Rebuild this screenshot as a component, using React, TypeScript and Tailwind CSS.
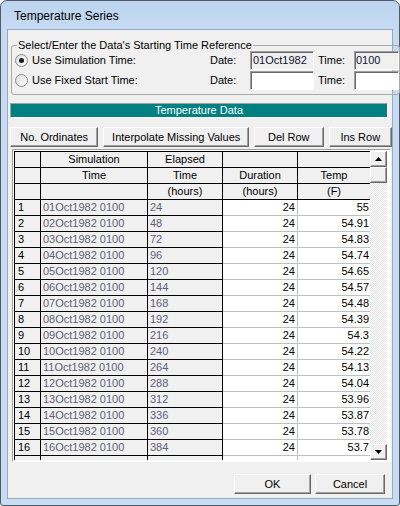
const temps = ['55', '54.91', '54.83', '54.74', '54.65', '54.57', '54.48', '54.39', '54.3', '54.22', '54.13', '54.04', '53.96', '53.87', '53.78', '53.7']

const btn =
  'flex items-center justify-center h-[20px] bg-[#f0f0f0] border border-t-white border-l-white border-r-[#696969] border-b-[#696969] shadow-[inset_-1px_-1px_0_#a0a0a0] text-[11px] text-black'

const sunken =
  'border border-t-[#a0a0a0] border-l-[#a0a0a0] border-r-white border-b-white shadow-[inset_1px_1px_0_#696969]'

function Radio({ checked }: { checked?: boolean }) {
  return (
    <span className="w-[13px] h-[13px] rounded-full border border-[#8a8a8a] bg-[linear-gradient(135deg,#dcdcdc,#ffffff)] flex items-center justify-center shrink-0">
      {checked && <span className="w-[5px] h-[5px] rounded-full bg-[#1a1a1a]" />}
    </span>
  )
}

function HeadRow({ cells }: { cells: string[] }) {
  return (
    <div className="flex h-[16px] shrink-0">
      <div className="w-[26px] border-r border-b border-black bg-[#f0f0f0]">{cells[0]}</div>
      <div className="w-[107px] border-r border-b border-black bg-[#f0f0f0] text-center leading-[15px]">{cells[1]}</div>
      <div className="w-[75px] border-r border-b border-black bg-[#f0f0f0] text-center leading-[15px]">{cells[2]}</div>
      <div className="w-[75px] border-r border-b border-black bg-[#f0f0f0] text-center leading-[15px]">{cells[3]}</div>
      <div className="w-[72px] border-b border-black bg-[#f0f0f0] text-center leading-[15px]">{cells[4]}</div>
    </div>
  )
}

function DataRow({ i }: { i: number }) {
  const has = i < temps.length
  return (
    <div className="flex h-[16px] shrink-0 leading-[15px]">
      <div className="w-[26px] border-r border-b border-black bg-[#f0f0f0] pl-[3px]">{has ? i + 1 : ''}</div>
      <div className="w-[107px] border-r border-b border-black bg-[#f0f0f0] pl-[2px] text-[#5e5e72]">
        {has ? `${String(i + 1).padStart(2, '0')}Oct1982 0100` : ''}
      </div>
      <div className="w-[75px] border-r border-b border-black bg-[#f0f0f0] pl-[2px] text-[#5e5e72]">{has ? (i + 1) * 24 : ''}</div>
      <div className="w-[75px] border-r border-b border-[#c0c0c0] bg-white text-right pr-[2px]">{has ? '24' : ''}</div>
      <div className="w-[72px] border-b border-[#c0c0c0] bg-white text-right pr-[1px]">{has ? temps[i] : ''}</div>
    </div>
  )
}

function ScrollBtn({ up }: { up?: boolean }) {
  return (
    <div className="h-[16px] shrink-0 bg-[#f0f0f0] border border-t-white border-l-white border-r-[#696969] border-b-[#696969] shadow-[inset_-1px_-1px_0_#a0a0a0] flex items-center justify-center">
      {up !== undefined && (
        <svg width="7" height="4" viewBox="0 0 7 4">
          <polygon points={up ? '3.5,0 7,4 0,4' : '0,0 7,0 3.5,4'} fill="#000" />
        </svg>
      )}
    </div>
  )
}

export default function App() {
  return (
    <div className="w-[400px] h-[506px] flex flex-col border border-[#4e5a68] rounded-t-[7px] rounded-b-[3px] bg-[linear-gradient(180deg,#bcd4ee_0px,#c6dbf2_30px,#c9ddf2_100%)] px-[6px] pb-[6px] font-['Liberation_Sans',Arial,sans-serif] text-[11px] text-black">
      <div className="h-[28px] shrink-0 flex items-center pl-[7px] pt-[1px] text-[12px]">Temperature Series</div>
      <div className="flex-1 min-h-0 border border-[#94a9c2] bg-[#f0f0f0] flex flex-col">
        <fieldset className="mt-[8px] ml-[3px] border border-[#a8a8a8] rounded-[3px] pb-[4px]">
          <legend className="ml-[5px] px-[1px] leading-[14px]">Select/Enter the Data's Starting Time Reference</legend>
          <div className="-mt-[2px] overflow-hidden">
            <div className="flex items-center h-[20px]">
              <div className="w-[198px] pl-[3px] flex items-center gap-[4px]">
                <Radio checked />
                <span>Use Simulation Time:</span>
              </div>
              <span className="w-[40px]">Date:</span>
              <div className={`w-[64px] h-[19px] shrink-0 bg-[#f0f0f0] pl-[2px] leading-[17px] text-[#101030] ${sunken}`}>01Oct1982</div>
              <span className="w-[40px] pl-[4px] shrink-0">Time:</span>
              <div className={`w-[45px] h-[19px] shrink-0 bg-[#f0f0f0] pl-[1px] leading-[17px] text-[#101030] ${sunken}`}>0100</div>
            </div>
            <div className="flex items-center h-[20px]">
              <div className="w-[198px] pl-[3px] flex items-center gap-[4px]">
                <Radio />
                <span>Use Fixed Start Time:</span>
              </div>
              <span className="w-[40px]">Date:</span>
              <div className={`w-[64px] h-[19px] shrink-0 bg-white ${sunken}`} />
              <span className="w-[40px] pl-[4px] shrink-0">Time:</span>
              <div className={`w-[45px] h-[19px] shrink-0 bg-white ${sunken}`} />
            </div>
          </div>
        </fieldset>

        <div className="mt-[8px] ml-[2px] mr-[4px] h-[15px] shrink-0 bg-[#008080] border border-t-[#a0a0a0] border-l-[#a0a0a0] border-r-white border-b-white text-white text-center leading-[13px]">
          Temperature Data
        </div>

        <div className="mt-[9px] ml-[2px] flex gap-[5px] shrink-0">
          <button className={`${btn} w-[89px]`}>No. Ordinates</button>
          <button className={`${btn} w-[147px]`}>Interpolate Missing Values</button>
          <button className={`${btn} w-[70px]`}>Del Row</button>
          <button className={`${btn} w-[64px]`}>Ins Row</button>
        </div>

        <div className="mt-[2px] ml-[4px] mr-[1px] h-[313px] shrink-0 border border-t-[#a0a0a0] border-l-[#a0a0a0] border-r-white border-b-white bg-white p-[1px] flex">
          <div className="flex flex-col border-l border-t border-black overflow-hidden h-[309px]">
            <HeadRow cells={['', 'Simulation', 'Elapsed', '', '']} />
            <HeadRow cells={['', 'Time', 'Time', 'Duration', 'Temp']} />
            <HeadRow cells={['', '', '(hours)', '(hours)', '(F)']} />
            {Array.from({ length: 17 }, (_, i) => (
              <DataRow key={i} i={i} />
            ))}
          </div>
          <div className="w-[17px] h-[309px] flex flex-col">
            <ScrollBtn up />
            <ScrollBtn />
            <div className="flex-1 bg-[repeating-conic-gradient(#e4e4e4_0_25%,#ffffff_0_50%)] bg-[length:2px_2px]" />
            <ScrollBtn up={false} />
          </div>
        </div>

        <div className="mt-[12px] flex justify-end gap-[4px] pr-[7px] shrink-0">
          <button className={`${btn} w-[77px]`}>OK</button>
          <button className={`${btn} w-[70px]`}>Cancel</button>
        </div>
      </div>
    </div>
  )
}
